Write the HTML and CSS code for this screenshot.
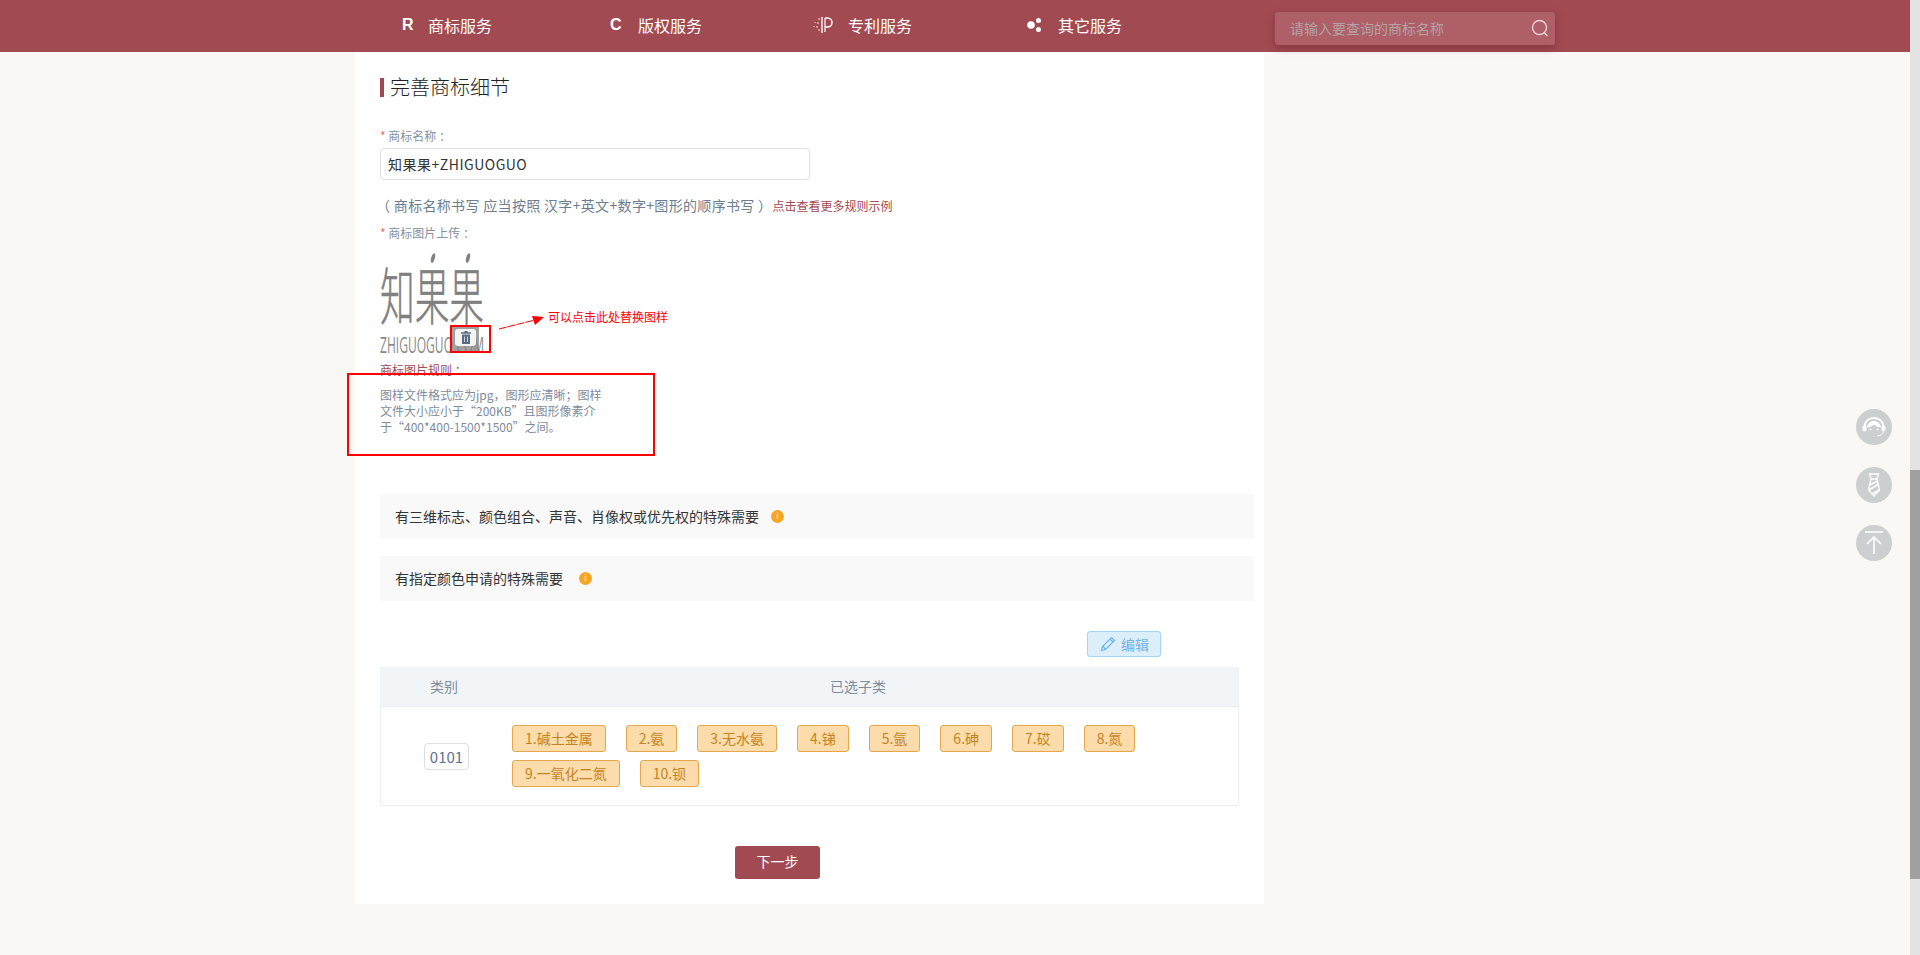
FILE: index.html
```html
<!DOCTYPE html>
<html lang="zh-CN">
<head>
<meta charset="utf-8">
<title>完善商标细节</title>
<link rel="stylesheet" href="styles.css">
</head>
<body>
<div class="page">
  <div class="main">
    <header class="topbar">
      <nav class="nav">
        <a class="nav-item"><span class="nav-icon"><b class="letter letter-r">R</b></span>商标服务</a>
        <a class="nav-item"><span class="nav-icon"><b class="letter letter-c">C</b></span>版权服务</a>
        <a class="nav-item"><span class="nav-icon">
          <svg class="patent-icon" width="22" height="18" viewBox="0 0 22 18"><g fill="none" stroke="#fff"><path d="M10 1v16" stroke-width="1.800" opacity=".75"/><path d="M13 2h2.500a4.500 4.500 0 0 1 0 9H13" stroke-width="1.500"/><path d="M13 2v14" stroke-width="1.400" opacity=".85"/><path d="M7 2v2M6 6v2M5 10v2M7 13v2M3 6v1M2 10v1" stroke-width="1.400" opacity=".6"/></g></svg>
        </span>专利服务</a>
        <a class="nav-item"><span class="nav-icon">
          <svg class="dots-icon" width="16" height="16" viewBox="0 0 16 16"><circle cx="5" cy="8" r="3.800" fill="#fff"/><circle cx="12.500" cy="3.500" r="2.500" fill="#fff"/><circle cx="12.500" cy="12.500" r="2.500" fill="#fff"/></svg>
        </span>其它服务</a>
      </nav>
      <div class="search">
        <span class="search-text">请输入要查询的商标名称</span>
        <svg class="search-icon" width="18" height="18" viewBox="0 0 18 18"><circle cx="8.500" cy="8.500" r="7" fill="none" stroke="#e8d5d7" stroke-width="1.400"/><path d="M13 13.500l3.500 3.500" stroke="#e8d5d7" stroke-width="1.400" fill="none"/></svg>
      </div>
    </header>

    <main class="card">
      <h2 class="title">完善商标细节</h2>

      <div class="label label-first"><i class="req">*</i> 商标名称 ：</div>
      <div class="input">知果果+ZHIGUOGUO</div>
      <div class="hint"><span class="hint-main">（ 商标名称书写 应当按照 汉字+英文+数字+图形的顺序书写 ）</span><a class="hint-link">点击查看更多规则示例</a></div>

      <div class="label label-upload"><i class="req">*</i> 商标图片上传 ：</div>
      <div class="logo-box">
        <svg class="logo" width="104" height="101" viewBox="0 0 104 101">
          <ellipse cx="53" cy="5" rx="1.800" ry="5" fill="#808080" transform="rotate(15 53 5)"/>
          <ellipse cx="88" cy="5" rx="1.800" ry="5" fill="#808080" transform="rotate(15 88 5)"/>
          <text class="logo-cn" x="0" y="67" textLength="104" lengthAdjust="spacingAndGlyphs">知果果</text>
          <text class="logo-en" x="0" y="100" textLength="104" lengthAdjust="spacingAndGlyphs">ZHIGUOGUO.COM</text>
        </svg>
        <div class="del-mask">
          <span class="del-btn">
            <svg width="10" height="13" viewBox="0 0 10 13"><path d="M3.500 0h3v1.200H10v1.600H0V1.200h3.500z" fill="#5b6b80"/><path d="M1 3.500h8V13H1z" fill="#5b6b80"/><path d="M3.500 5.500v5.500M6.500 5.500v5.500" stroke="#c9d0d9" fill="none"/></svg>
          </span>
        </div>
      </div>

      <div class="rule-title">商标图片规则 ：</div>
      <p class="rule-text">图样文件格式应为jpg，图形应清晰；图样<br>文件大小应小于“200KB”且图形像素介<br>于“400*400-1500*1500”之间。</p>

      <div class="panel panel-first">有三维标志、颜色组合、声音、肖像权或优先权的特殊需要<span class="info info-a">i</span></div>
      <div class="panel panel-second">有指定颜色申请的特殊需要<span class="info info-b">i</span></div>

      <a class="edit-btn">
        <svg width="16" height="16" viewBox="0 0 16 16"><path d="M1.500 14.500l1-4L11.500 1.500l3 3-9 9zM10 3l3 3M3 10.500l2.500 2.500" fill="none" stroke="#6bb7ee" stroke-width="1.200"/></svg>
        <span>编辑</span>
      </a>

      <section class="table">
        <div class="thead">
          <div class="col-a">类别</div>
          <div class="col-b">已选子类</div>
        </div>
        <div class="tbody">
          <div class="col-a"><span class="code">0101</span></div>
          <div class="tags">
            <span class="tag">1.碱土金属</span>
            <span class="tag">2.氨</span>
            <span class="tag">3.无水氨</span>
            <span class="tag">4.锑</span>
            <span class="tag">5.氩</span>
            <span class="tag">6.砷</span>
            <span class="tag">7.砹</span>
            <span class="tag">8.氮</span>
            <span class="tag">9.一氧化二氮</span>
            <span class="tag">10.钡</span>
          </div>
        </div>
      </section>

      <a class="next-btn">下一步</a>

      <div class="mark-box mark-small"></div>
      <div class="mark-box mark-large"></div>
      <svg class="mark-arrow" width="46" height="16" viewBox="0 0 46 16"><path d="M0 14L36 5" fill="none" stroke="#f00" stroke-dasharray="8 1"/><path d="M45 2L33 1l3 9z" fill="#f00"/></svg>
      <div class="mark-note">可以点击此处替换图样</div>
    </main>

    <aside class="side">
      <span class="side-btn">
        <svg width="24" height="20" viewBox="0 0 24 20"><path d="M2.500 11C2.500 4 7 1 12 1s9.500 3 9.500 10" fill="none" stroke="#fff" stroke-width="2"/><path d="M5 10.500c.5-4 3.500-6.500 7-6.500s6.500 2.500 7 6.500c-3-.5-5.500-1.500-7-3-1.500 1.500-4 3-7 3z" fill="#fff"/><rect x="0.500" y="8.500" width="4" height="6" rx="2" fill="#fff"/><rect x="19.500" y="8.500" width="4" height="6" rx="2" fill="#fff"/><circle cx="8.500" cy="12.500" r=".9" fill="#fff"/><circle cx="15.500" cy="12.500" r=".9" fill="#fff"/><path d="M21.500 14.500c-.5 2.500-3 4-6 4.500" fill="none" stroke="#fff"/></svg>
      </span>
      <span class="side-btn">
        <svg width="12" height="24" viewBox="0 0 12 24"><path d="M1.500 1h9L9 6l2.500 11L6 23 .5 17 3 6z" fill="none" stroke="#fff" stroke-width="1.300"/><path d="M3 6h6M1.500 12l8.500-4M1 17l10-6M4 21l7-4" fill="none" stroke="#fff" stroke-width="1.500"/></svg>
      </span>
      <span class="side-btn">
        <svg width="20" height="24" viewBox="0 0 20 24"><path d="M1 1h18M10 6v17M3 13l7-7 7 7" fill="none" stroke="#fff" stroke-width="1.600"/></svg>
      </span>
    </aside>
  </div>
  <div class="scrollbar"><div class="thumb"></div></div>
</div>
</body>
</html>
```
FILE: styles.css
```css
* { box-sizing: border-box; }
html, body { margin: 0; height: 955px; overflow: hidden; }
body {
  background: #f9f8f4;
  font-family: "Noto Sans CJK SC", "Noto Sans", sans-serif;
  color: #333;
}
.page { display: flex; height: 955px; }
.main { flex: 1; position: relative; min-width: 0; }
.scrollbar { width: 10px; background: #e3e3e3; padding-top: 470px; }
.thumb { height: 409px; background: #a0a0a0; }

.topbar {
  height: 52px;
  background: #a24a52;
  display: flex;
  padding-left: 394px;
  position: relative;
  z-index: 2;
}
.nav { display: grid; grid-template-columns: repeat(4, 210px); }
.nav-item {
  display: flex;
  align-items: center;
  height: 52px;
  padding-bottom: 2px;
  color: #fff;
  font-size: 16px;
  line-height: 20px;
}
.nav-icon { width: 34px; height: 20px; position: relative; flex: none; display: block; }
.letter { position: absolute; top: 0; font: 700 16px/20px "Liberation Sans", sans-serif; }
.letter-r { left: 8px; }
.letter-c { left: 6px; }
.patent-icon { position: absolute; left: -2px; top: 1px; }
.dots-icon { position: absolute; left: 2px; top: 2px; }

.search {
  width: 280px;
  height: 33px;
  margin: 12px 0 0 41px;
  background: #ae5f67;
  border-radius: 3px;
  box-shadow: 0 3px 8px rgba(80, 20, 30, .35);
  display: flex;
  align-items: center;
  justify-content: space-between;
  padding: 0 6px 2px 15px;
}
.search-text { font-size: 14px; color: #b4a2a4; line-height: 20px; }

.card {
  position: relative;
  width: 909px;
  height: 852px;
  margin-left: 355px;
  background: #fff;
  padding: 26px 25px 25px;
}
.title {
  margin: 0;
  font-size: 20px;
  font-weight: 300;
  line-height: 17px;
  padding-bottom: 2px;
  border-left: 4px solid #a24a52;
  padding-left: 6px;
  color: #222;
}
.label { font-size: 12px; line-height: 16px; color: #8492a6; }
.label-first { margin-top: 31px; }
.label-upload { margin-top: 9px; }
.req { color: #f56c6c; font-style: normal; }
.input {
  width: 430px;
  height: 32px;
  margin-top: 4px;
  border: 1px solid #dcdfe6;
  border-radius: 4px;
  padding: 0 7px;
  font-size: 14px;
  line-height: 30px;
  letter-spacing: .5px;
  color: #333;
}
.hint { margin: 15px 0 0 -4px; font-size: 14px; line-height: 20px; color: #6d7d90; white-space: nowrap; }
.hint-main { letter-spacing: .33px; }
.hint-link { font-size: 12px; color: #a24a52; }

.logo-box { position: relative; width: 104px; height: 101px; margin-top: 12px; }
.logo { display: block; overflow: visible; }
.logo-cn { font-size: 62px; font-weight: 300; fill: #808080; stroke: #808080; stroke-width: .5px; font-family: "Noto Sans CJK SC", sans-serif; }
.logo-en { font-size: 21px; font-weight: 400; fill: #8a8a8a; font-family: "Open Sans", sans-serif; }
.del-mask {
  position: absolute;
  left: 72px;
  top: 73px;
  width: 27px;
  height: 27px;
  background: rgba(130, 130, 130, .75);
  padding: 3px;
}
.del-btn {
  display: flex;
  align-items: center;
  justify-content: center;
  width: 21px;
  height: 17px;
  background: #f4f4f4;
  border-radius: 3px;
}
.rule-title { margin-top: 8px; font-size: 12px; line-height: 16px; color: #a24a52; }
.rule-text { margin: 9px 0 0; font-size: 12px; line-height: 16px; color: #7f8c9c; white-space: nowrap; }

.panel {
  width: 874px;
  height: 45px;
  background: #f9f9f9;
  padding-left: 15px;
  font-size: 14px;
  line-height: 45px;
  color: #333;
  display: flex;
  align-items: center;
}
.panel-first { margin-top: 59px; }
.panel-second { margin-top: 17px; }
.info {
  width: 13px;
  height: 13px;
  border-radius: 50%;
  background: #f5a623;
  color: #fff;
  font: 400 9px/13px "Liberation Sans", sans-serif;
  text-align: center;
  margin-left: 12px;
}
.info-b { margin-left: 16px; }

.edit-btn {
  width: 74px;
  height: 26px;
  margin: 30px 0 0 707px;
  background: #ddeefb;
  border: 1px solid #a6d6f7;
  border-radius: 3px;
  color: #6fb2e8;
  font-size: 14px;
  display: flex;
  align-items: center;
  padding-left: 12px;
  gap: 5px;
  line-height: 20px;
}

.table { width: 859px; margin-top: 10px; }
.thead {
  display: flex;
  align-items: center;
  height: 40px;
  padding-bottom: 1px;
  background: #f2f5f8;
  font-size: 14px;
  color: #7f8c9c;
  border-bottom: 1px solid #ebeef5;
}
.col-a { width: 128px; flex: none; text-align: center; }
.col-b { flex: 1; text-align: center; padding-right: 31px; }
.tbody {
  display: flex;
  align-items: center;
  height: 99px;
  border: 1px solid #ebeef5;
  border-top: 0;
}
.tbody .col-a { width: 131px; }
.code {
  display: inline-block;
  height: 27px;
  padding: 0 5px;
  border: 1px solid #dcdfe6;
  border-radius: 4px;
  font-size: 15px;
  line-height: 25px;
  color: #5d7391;
}
.tags { flex: 1; display: flex; flex-wrap: wrap; gap: 8px 20px; }
.tag {
  height: 27px;
  padding: 0 12px;
  background: #fcdcaa;
  border: 1px solid #e5a64e;
  border-radius: 3px;
  font-size: 14px;
  line-height: 25px;
  color: #c5831f;
}

.next-btn {
  display: block;
  width: 85px;
  height: 33px;
  margin: 40px 0 0 355px;
  background: #a24a52;
  border-radius: 3px;
  color: #fff;
  font-size: 14px;
  line-height: 31px;
  text-align: center;
}

.mark-box { position: absolute; border: 2px solid #f00; }
.mark-small { left: 95px; top: 273px; width: 41px; height: 28px; }
.mark-large { left: -8px; top: 321px; width: 308px; height: 83px; }
.mark-arrow { position: absolute; left: 144px; top: 263px; }
.mark-note { position: absolute; left: 193px; top: 257px; font-size: 12px; line-height: 16px; color: #f00; }

.side {
  position: fixed;
  left: 1856px;
  top: 409px;
  display: flex;
  flex-direction: column;
  gap: 22px;
  z-index: 3;
}
.side-btn {
  width: 36px;
  height: 36px;
  border-radius: 50%;
  background: #cdcecf;
  display: flex;
  align-items: center;
  justify-content: center;
}
```
